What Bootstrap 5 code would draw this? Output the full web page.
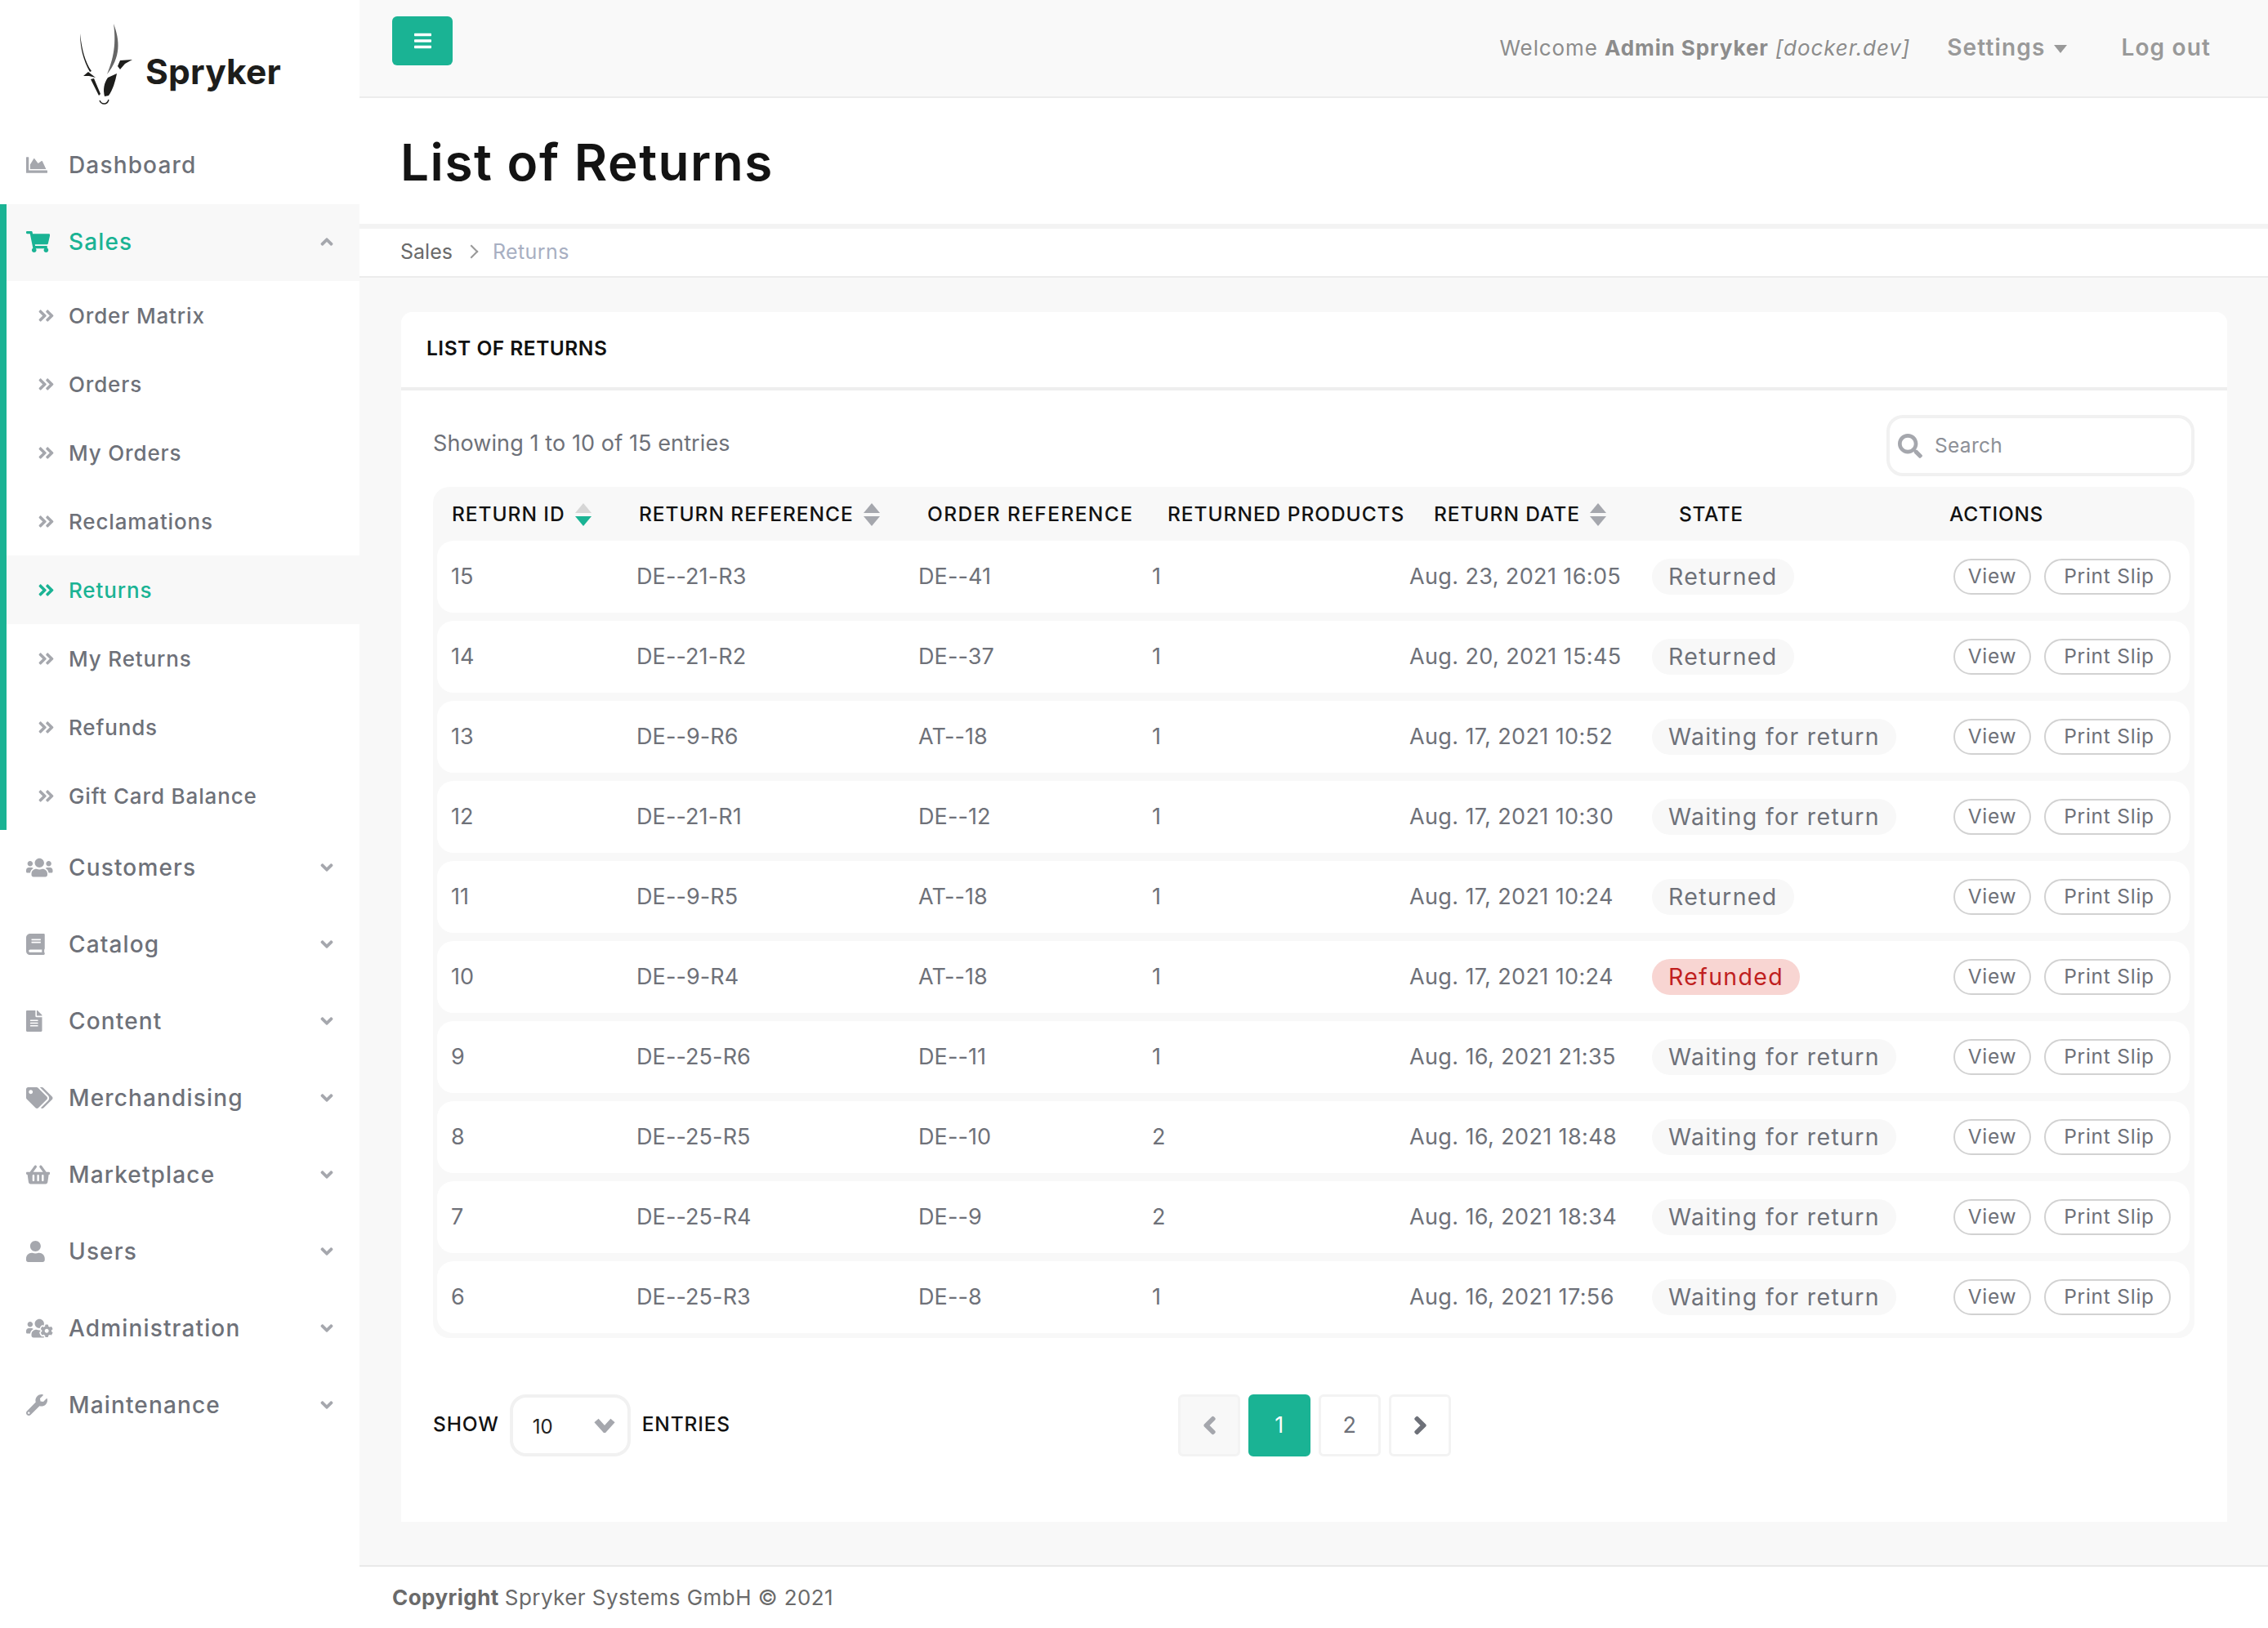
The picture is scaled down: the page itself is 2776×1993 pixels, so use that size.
<!DOCTYPE html>
<html lang="en"><head><meta charset="utf-8"><title>List of Returns</title>
<link href="https://cdn.jsdelivr.net/npm/bootstrap@5.3.0/dist/css/bootstrap.min.css" rel="stylesheet">
<style>
:root{--sg:#1ab394;--tx:#6e7179;--ic:#a5a7ad;--bgs:#f8f8f8}
html,body{height:100%}
body{font-family:Inter,"Noto Sans",sans-serif;background:var(--bgs);color:var(--tx);font-size:27px;letter-spacing:.5px}
.shell{display:flex;min-height:1993px}
.side{width:440px;flex:none;background:#fff}
.brand{height:156px;display:block;position:relative}
.brand svg{display:block}
.brand-word{font-family:Inter,sans-serif;font-weight:700;font-size:42.5px;letter-spacing:.2px;color:#1d1d1b;line-height:1;position:absolute;left:178px;top:67px}
.mlink{display:flex;align-items:center;height:94px;padding:0 32px 2px;color:var(--tx);text-decoration:none;font-size:28px;font-weight:500;letter-spacing:1.15px;line-height:1}
.mlink svg.ico{height:26px;width:auto;fill:var(--ic);flex:none}
.ibox{width:52px;flex:none;display:flex}
.mlink .arw{height:24px;width:16px;fill:var(--ic);margin-left:auto;margin-right:0}
.mopen{border-left:8px solid var(--sg)}
.mopen>.mlink{background:var(--bgs);color:var(--sg);padding-left:24px}
.mopen>.mlink svg.ico{fill:var(--sg)}
.slink{display:flex;align-items:center;height:84px;padding-left:38px;color:var(--tx);text-decoration:none;font-size:26px;font-weight:500;letter-spacing:.85px}
.slink svg{height:23px;width:21px;fill:var(--ic);margin-right:17px;flex:none}
.slink.on{background:var(--bgs);color:var(--sg)}
.slink.on svg{fill:var(--sg)}
.mainc{flex:1;display:flex;flex-direction:column;min-width:0}
.topb{height:120px;border-bottom:2px solid #ececec;padding:20px 70px 0 40px;display:flex;background:#f9f9f9;color:#999}
.burger{width:74px;height:60px;background:var(--sg);border:0;border-radius:6px;display:flex;align-items:center;justify-content:center;padding:0}
.burger svg{width:21px;height:24px;fill:#fff}
.tright{margin-left:auto;display:flex;align-items:center;height:76px;font-size:26px;letter-spacing:.9px;color:#8c8c8c}
.tright b{font-weight:700}
.tlink{font-size:28px;font-weight:600;color:#999;text-decoration:none;letter-spacing:1.15px}
.caretd{display:inline-block;border-top:10px solid #999;border-left:8px solid transparent;border-right:8px solid transparent;margin-left:11px;vertical-align:3px}
.gap-set{margin-left:45px}
.gap-out{margin-left:66px}
.phead{height:160px;background:#fff;display:flex;align-items:center;padding:3px 0 0 50px;border-bottom:6px solid #f3f3f3}
.phead h1{font-size:62px;font-weight:600;color:#131313;margin:0;letter-spacing:1.55px;line-height:1}
.crumbs{height:60px;background:#fff;border-bottom:2px solid #ececec;padding:0 50px;display:flex;align-items:center}
.crumbs .breadcrumb{margin:0;font-size:25px;letter-spacing:0;--bs-breadcrumb-item-padding-x:0}
.crumbs a{color:#6a6a6a;text-decoration:none}
.crumbs .breadcrumb-item.active{color:#a8afc2;letter-spacing:.4px}
.crumbs .breadcrumb-item+.breadcrumb-item::before{content:"";float:none;display:inline-block;width:12px;height:12px;border-top:2px solid #999;border-right:2px solid #999;transform:rotate(45deg);padding:0;margin:0 20px 3px 17px}
.pagew{padding:42px 50px 0 51px;flex:1}
.rcard{background:#fff;border:0;border-radius:14px 14px 0 0;height:1481px;--bs-card-bg:#fff}
.rcard .card-header{height:96px;background:#fff;border:0;border-bottom:4px solid #eee;padding:0 31px 4px;display:flex;align-items:center;font-size:24.5px;font-weight:600;color:#111;letter-spacing:.5px;border-radius:14px 14px 0 0}
.rcard .card-body{padding:30px 40px 80px 39px}
.tools{display:flex;justify-content:space-between;height:75px}
.showing{font-size:27px;margin-top:15px;letter-spacing:.1px}
.srch{width:377px;height:75px;border:4px solid #f1f1f1;border-radius:20px;display:flex;align-items:center;padding-left:10px;background:#fff}
.srch svg{width:30px;height:30px;fill:#a5a7ad;flex:none;margin:0 15px 0 0}
.srch input{border:0;outline:0;background:transparent;font-size:24.5px;color:#777;width:280px;padding:0;letter-spacing:.3px;font-weight:400}
.srch input::placeholder{color:#8d9097;opacity:1}
.twrap{margin-top:13px;background:var(--bgs);border-radius:20px;padding:0 6px 0 5px;height:1042px;overflow:hidden}
.rtable{table-layout:fixed;width:2145px;margin:0;border-collapse:separate;border-spacing:0 10px;--bs-table-bg:transparent;--bs-table-color:var(--tx)}
.rtable th{height:46px;padding:0 0 0 18px;background:transparent;border:0;font-size:24.5px;font-weight:500;color:#121212;white-space:nowrap;vertical-align:middle;letter-spacing:.95px;box-shadow:none}
.rtable th:nth-child(2){padding-left:19px}.rtable th:nth-child(3){padding-left:27px;letter-spacing:1.4px}.rtable th:nth-child(4){padding-left:36px}.rtable th:nth-child(5){padding-left:47px}.rtable th:nth-child(6){padding-left:50px;letter-spacing:.6px}.rtable th:nth-child(7){padding-left:15px;letter-spacing:.7px}
.rtable td{height:88px;padding:1px 0 0 17px;background:#fff;border:0;vertical-align:middle;font-size:27px;white-space:nowrap;letter-spacing:.1px;box-shadow:none}
.rtable td:first-child{border-radius:20px 0 0 20px}
.rtable td:nth-child(2),.rtable td:nth-child(3){padding-left:16px}
.rtable td:nth-child(5){letter-spacing:.38px}
.rtable td:last-child{border-radius:0 20px 20px 0;padding:0 0 0 20px}
.rtable td:nth-child(6){padding-top:0}
.sorti{width:20px;height:28px;vertical-align:-6px;margin-left:12px}
.stpill{display:inline-block;height:44px;line-height:44px;padding:0 20px;border-radius:22px;background:var(--bgs);color:var(--tx);font-size:28.5px;letter-spacing:1.35px}
.stpill.rf{background:#f8d5d2;color:#c01f1f}
.pillbtn{--bs-btn-font-size:24.5px;--bs-btn-color:var(--tx);--bs-btn-border-color:#d2d2d2;--bs-btn-border-width:2px;--bs-btn-padding-x:0;--bs-btn-padding-y:0;--bs-btn-border-radius:22px;--bs-btn-line-height:38px;--bs-btn-bg:#fff;--bs-btn-hover-bg:#fff;--bs-btn-hover-color:var(--tx);letter-spacing:.75px;text-align:center;font-weight:400;padding-bottom:2px}
.pv{width:95px}.pp{width:155px;margin-left:16px;padding-left:4px}
.foot-t{display:flex;margin-top:69px;height:76px}
.lenw{display:flex;align-items:center;width:912px;font-size:24.5px;color:#121212;font-weight:500;letter-spacing:.85px;padding-bottom:3px}
.lensel{width:148px;height:76px;margin:3px 14px 0 13px;border:4px solid #f1f1f1;border-radius:20px;font-size:24px;color:#222;padding:3px 0 0 24px;letter-spacing:0;--bs-form-select-bg-img:none;background-image:none}
.lenbox{position:relative;display:flex}
.lenbox svg{position:absolute;right:33px;top:32px;width:26px;height:18px;fill:none;stroke:#a5a7ad;stroke-width:7;pointer-events:none}
.pgs{margin:0;gap:10px;display:flex;--bs-pagination-border-radius:6px}
.pgs .page-link{width:76px;height:76px;padding:0;display:flex;align-items:center;justify-content:center;border:3px solid #f3f3f3;border-radius:6px!important;color:var(--tx);font-size:27px;background:#fff;margin:0}
.pgs .page-link svg{height:24px;width:15px;fill:var(--tx);stroke:var(--tx);stroke-width:40}
.pgs .pdis{background:var(--bgs)}
.pgs .pdis svg{fill:var(--ic);stroke:var(--ic)}
.pgs .active .page-link{background:var(--sg);border-color:var(--sg);color:#fff}
.pgs .page-item:not(:first-child) .page-link{margin-left:0}
.cfoot{height:77px;background:#fff;border-top:2px solid #e9e9e9;padding:0 40px;display:flex;align-items:center;font-size:26px;color:#6a6a6a;letter-spacing:.45px;margin-top:auto}
.cfoot b{font-weight:700;margin-right:7px}
</style></head>
<body>
<div class="shell">
<aside class="side">
 <a class="brand" href="#">
  <svg width="180" height="156" viewBox="0 0 180 156">
   <path fill="#1d1d1b" d="M98 41C100 60 104 76 112 87L110 88C102 74 98 58 98 41Z"/>
   <path fill="#666" d="M139 29C147 50 148 70 131 91C137 76 143 58 139 29Z"/>
   <path fill="#1d1d1b" d="M147 74L162 73L153 78L147 85L144 81Z"/>
   <path fill="#1d1d1b" d="M102 93L108 88L117 95L109 93Z"/>
   <path fill="#1d1d1b" d="M111 97L115 96L123 115L121 117Z"/>
   <path fill="#1d1d1b" d="M143 90L132 95C127 102 126 110 128 118L133 117C138 110 141 100 143 90Z"/>
   <path fill="none" stroke="#1d1d1b" stroke-width="1.4" d="M122 123C124 128 131 129 133 122"/>
  </svg>
  <span class="brand-word">Spryker</span>
 </a>
 <nav>
  <a class="mlink" href="#"><span class="ibox"><svg class="ico" viewBox="0 0 512 512"><path d="M500 384c6.6 0 12 5.4 12 12v40c0 6.6-5.4 12-12 12H12c-6.6 0-12-5.4-12-12V76c0-6.6 5.4-12 12-12h40c6.6 0 12 5.4 12 12v308h436zM372.700 159.500L288 216l-85.300-113.700c-5.100-6.800-15.500-6.300-19.900 1L96 248v104h384l-89.900-187.800c-3.200-6.500-11.400-8.700-17.400-4.700z"/></svg></span>Dashboard</a>
  <div class="mopen">
   <a class="mlink" href="#"><span class="ibox"><svg class="ico" viewBox="0 0 576 512"><path d="M528.120 301.319l47.273-208C578.806 78.301 567.391 64 551.990 64H159.208l-9.166-44.810C147.758 8.021 137.930 0 126.529 0H24C10.745 0 0 10.745 0 24v16c0 13.255 10.745 24 24 24h69.883l70.248 343.435C147.325 417.100 136 435.222 136 456c0 30.928 25.072 56 56 56s56-25.072 56-56c0-15.674-6.447-29.835-16.824-40h209.647C430.447 426.165 424 440.326 424 456c0 30.928 25.072 56 56 56s56-25.072 56-56c0-22.172-12.888-41.332-31.579-50.405l5.517-24.276c3.413-15.018-8.002-29.319-23.403-29.319H218.117l-6.545-32h293.145c11.206 0 20.920-7.754 23.403-18.681z"/></svg></span>Sales<svg class="arw" viewBox="0 0 320 512"><path d="M177 159.700l136 136c9.400 9.400 9.400 24.600 0 33.900l-22.600 22.600c-9.400 9.400-24.600 9.400-33.900 0L160 255.900l-96.400 96.400c-9.400 9.400-24.600 9.400-33.900 0L7 329.700c-9.400-9.400-9.400-24.600 0-33.900l136-136c9.400-9.500 24.600-9.500 34-.100z"/></svg></a>
   <a class="slink" href="#"><svg viewBox="0 0 448 512"><use href="#dbl"/></svg>Order Matrix</a>
   <a class="slink" href="#"><svg viewBox="0 0 448 512"><use href="#dbl"/></svg>Orders</a>
   <a class="slink" href="#"><svg viewBox="0 0 448 512"><use href="#dbl"/></svg>My Orders</a>
   <a class="slink" href="#"><svg viewBox="0 0 448 512"><use href="#dbl"/></svg>Reclamations</a>
   <a class="slink on" href="#"><svg viewBox="0 0 448 512"><use href="#dbl"/></svg>Returns</a>
   <a class="slink" href="#"><svg viewBox="0 0 448 512"><use href="#dbl"/></svg>My Returns</a>
   <a class="slink" href="#"><svg viewBox="0 0 448 512"><use href="#dbl"/></svg>Refunds</a>
   <a class="slink" href="#"><svg viewBox="0 0 448 512"><use href="#dbl"/></svg>Gift Card Balance</a>
  </div>
  <a class="mlink" href="#"><span class="ibox"><svg class="ico" viewBox="0 0 640 512"><path d="M96 224c35.300 0 64-28.700 64-64s-28.700-64-64-64-64 28.700-64 64 28.700 64 64 64zm448 0c35.300 0 64-28.700 64-64s-28.700-64-64-64-64 28.700-64 64 28.700 64 64 64zm32 32h-64c-17.600 0-33.500 7.100-45.100 18.600 40.300 22.100 68.900 62 75.100 109.400h66c17.700 0 32-14.300 32-32v-32c0-35.300-28.700-64-64-64zm-256 0c61.900 0 112-50.100 112-112S381.900 32 320 32 208 82.100 208 144s50.100 112 112 112zm76.800 32h-8.300c-20.800 10-43.900 16-68.500 16s-47.600-6-68.500-16h-8.300C179.600 288 128 339.600 128 403.200V432c0 26.500 21.500 48 48 48h288c26.500 0 48-21.500 48-48v-28.800c0-63.600-51.600-115.200-115.200-115.200zm-223.700-13.400C161.500 263.100 145.600 256 128 256H64c-35.300 0-64 28.700-64 64v32c0 17.700 14.300 32 32 32h65.900c6.300-47.400 34.900-87.300 75.200-109.400z"/></svg></span>Customers<svg class="arw" viewBox="0 0 320 512"><use href="#adn"/></svg></a>
  <a class="mlink" href="#"><span class="ibox"><svg class="ico" viewBox="0 0 448 512"><path d="M448 360V24c0-13.300-10.700-24-24-24H96C43 0 0 43 0 96v320c0 53 43 96 96 96h328c13.300 0 24-10.700 24-24v-16c0-7.500-3.500-14.300-8.900-18.700-4.200-15.400-4.200-59.300 0-74.700 5.400-4.300 8.900-11.100 8.900-18.600zM128 134c0-3.300 2.700-6 6-6h212c3.300 0 6 2.700 6 6v20c0 3.300-2.700 6-6 6H134c-3.300 0-6-2.700-6-6v-20zm0 64c0-3.300 2.700-6 6-6h212c3.300 0 6 2.700 6 6v20c0 3.300-2.700 6-6 6H134c-3.300 0-6-2.700-6-6v-20zm253.400 250H96c-17.700 0-32-14.300-32-32 0-17.600 14.400-32 32-32h285.400c-1.900 17.100-1.900 46.900 0 64z"/></svg></span>Catalog<svg class="arw" viewBox="0 0 320 512"><use href="#adn"/></svg></a>
  <a class="mlink" href="#"><span class="ibox"><svg class="ico" viewBox="0 0 384 512"><path d="M224 136V0H24C10.700 0 0 10.700 0 24v464c0 13.300 10.700 24 24 24h336c13.300 0 24-10.700 24-24V160H248c-13.200 0-24-10.800-24-24zm64 236c0 6.600-5.400 12-12 12H108c-6.600 0-12-5.400-12-12v-8c0-6.600 5.400-12 12-12h168c6.600 0 12 5.400 12 12v8zm0-64c0 6.600-5.400 12-12 12H108c-6.600 0-12-5.400-12-12v-8c0-6.600 5.400-12 12-12h168c6.600 0 12 5.400 12 12v8zm0-72v8c0 6.600-5.400 12-12 12H108c-6.600 0-12-5.400-12-12v-8c0-6.600 5.400-12 12-12h168c6.600 0 12 5.400 12 12zm96-114.100v6.100H256V0h6.100c6.400 0 12.500 2.500 17 7l97.900 98c4.500 4.500 7 10.600 7 16.900z"/></svg></span>Content<svg class="arw" viewBox="0 0 320 512"><use href="#adn"/></svg></a>
  <a class="mlink" href="#"><span class="ibox"><svg class="ico" viewBox="0 0 640 512"><path d="M497.941 225.941L286.059 14.059A48 48 0 0 0 252.118 0H48C21.490 0 0 21.490 0 48v204.118a48 48 0 0 0 14.059 33.941l211.882 211.882c18.744 18.745 49.136 18.746 67.882 0l204.118-204.118c18.745-18.745 18.745-49.137 0-67.882zM112 160c-26.510 0-48-21.490-48-48s21.490-48 48-48 48 21.490 48 48-21.490 48-48 48zm513.941 133.823L421.823 497.941c-18.745 18.745-49.137 18.745-67.882 0l-.360-.360L527.640 323.522c16.999-16.999 26.360-39.600 26.360-63.640s-9.362-46.641-26.360-63.640L331.397 0h48.721a48 48 0 0 1 33.941 14.059l211.882 211.882c18.745 18.745 18.745 49.137 0 67.882z"/></svg></span>Merchandising<svg class="arw" viewBox="0 0 320 512"><use href="#adn"/></svg></a>
  <a class="mlink" href="#"><span class="ibox"><svg class="ico" viewBox="0 0 576 512"><path d="M576 216v16c0 13.255-10.745 24-24 24h-8l-26.113 182.788C514.509 462.435 494.257 480 470.370 480H105.630c-23.887 0-44.139-17.565-47.518-41.212L32 256h-8c-13.255 0-24-10.745-24-24v-16c0-13.255 10.745-24 24-24h67.341l106.780-146.821c10.395-14.292 30.407-17.453 44.701-7.058 14.293 10.395 17.453 30.408 7.058 44.701L170.477 192h235.046L326.120 82.821c-10.395-14.292-7.234-34.306 7.059-44.701 14.291-10.395 34.306-7.235 44.701 7.058L484.659 192H552c13.255 0 24 10.745 24 24zM312 392V280c0-13.255-10.745-24-24-24s-24 10.745-24 24v112c0 13.255 10.745 24 24 24s24-10.745 24-24zm112 0V280c0-13.255-10.745-24-24-24s-24 10.745-24 24v112c0 13.255 10.745 24 24 24s24-10.745 24-24zm-224 0V280c0-13.255-10.745-24-24-24s-24 10.745-24 24v112c0 13.255 10.745 24 24 24s24-10.745 24-24z"/></svg></span>Marketplace<svg class="arw" viewBox="0 0 320 512"><use href="#adn"/></svg></a>
  <a class="mlink" href="#"><span class="ibox"><svg class="ico" viewBox="0 0 448 512"><path d="M224 256c70.700 0 128-57.300 128-128S294.700 0 224 0 96 57.300 96 128s57.300 128 128 128zm89.600 32h-16.700c-22.200 10.200-46.900 16-72.900 16s-50.600-5.800-72.900-16h-16.700C60.200 288 0 348.200 0 422.400V464c0 26.500 21.500 48 48 48h352c26.500 0 48-21.500 48-48v-41.600c0-74.200-60.200-134.400-134.400-134.400z"/></svg></span>Users<svg class="arw" viewBox="0 0 320 512"><use href="#adn"/></svg></a>
  <a class="mlink" href="#"><span class="ibox"><svg class="ico" viewBox="0 0 640 512"><path d="M610.500 341.300c2.600-14.100 2.600-28.500 0-42.600l25.800-14.900c3-1.700 4.300-5.200 3.300-8.500-6.700-21.600-18.200-41.200-33.200-57.400-2.300-2.500-6-3.100-9-1.400l-25.800 14.900c-10.900-9.300-23.400-16.500-36.900-21.300v-29.800c0-3.400-2.400-6.400-5.700-7.100-22.300-5-45-4.800-66.200 0-3.300.7-5.700 3.700-5.700 7.100v29.800c-13.500 4.800-26 12-36.900 21.300l-25.800-14.900c-2.900-1.700-6.700-1.100-9 1.400-15 16.200-26.500 35.800-33.200 57.400-1 3.300.4 6.800 3.300 8.500l25.800 14.900c-2.600 14.100-2.600 28.500 0 42.600l-25.800 14.900c-3 1.700-4.300 5.200-3.300 8.500 6.700 21.600 18.200 41.100 33.200 57.400 2.300 2.500 6 3.100 9 1.400l25.800-14.900c10.900 9.300 23.400 16.500 36.900 21.300v29.800c0 3.400 2.400 6.400 5.700 7.100 22.300 5 45 4.800 66.200 0 3.300-.7 5.700-3.700 5.700-7.100v-29.800c13.500-4.800 26-12 36.900-21.300l25.800 14.900c2.900 1.700 6.700 1.100 9-1.400 15-16.200 26.500-35.800 33.200-57.400 1-3.300-.4-6.800-3.300-8.500l-25.800-14.900zM496 368.500c-26.800 0-48.500-21.800-48.500-48.500s21.800-48.500 48.500-48.500 48.500 21.800 48.500 48.500-21.700 48.500-48.500 48.500zM96 224c35.300 0 64-28.700 64-64s-28.700-64-64-64-64 28.700-64 64 28.700 64 64 64zm224 32c1.900 0 3.700-.5 5.600-.6 8.300-21.700 20.500-42.100 36.300-59.200 7.400-8 17.900-12.600 28.900-12.600 6.900 0 13.700 1.800 19.600 5.300l7.900 4.600c.8-.5 1.600-.9 2.400-1.400 7-14.600 11.200-30.800 11.200-48 0-61.900-50.100-112-112-112S208 82.100 208 144c0 61.900 50.100 112 112 112zm105.200 194.500c-2.300-1.200-4.600-2.600-6.800-3.900-8.200 4.800-15.300 9.800-27.500 9.800-10.900 0-21.400-4.600-28.900-12.600-18.300-19.800-32.300-43.900-40.200-69.600-10.700-34.500 24.900-49.700 25.800-50.300-.1-2.600-.1-5.200 0-7.800l-7.900-4.600c-3.800-2.200-7-5-9.800-8.100-3.300.2-6.500.6-9.800.6-24.600 0-47.600-6-68.500-16h-8.300C179.600 288 128 339.600 128 403.200V432c0 26.500 21.500 48 48 48h255.400c-3.700-6-6.200-12.800-6.200-20.300v-9.200zM173.100 274.600C161.500 263.100 145.600 256 128 256H64c-35.300 0-64 28.700-64 64v32c0 17.700 14.300 32 32 32h65.900c6.300-47.400 34.900-87.300 75.200-109.400z"/></svg></span>Administration<svg class="arw" viewBox="0 0 320 512"><use href="#adn"/></svg></a>
  <a class="mlink" href="#"><span class="ibox"><svg class="ico" viewBox="0 0 512 512"><path d="M507.730 109.100c-2.240-9.030-13.540-12.090-20.120-5.510l-74.360 74.360-67.880-11.310-11.310-67.880 74.360-74.360c6.620-6.620 3.430-17.900-5.660-20.160-47.380-11.740-99.550.91-136.580 37.930-39.640 39.640-50.550 97.100-34.050 147.200L18.740 402.760c-24.990 24.990-24.990 65.510 0 90.500 24.990 24.990 65.510 24.990 90.500 0l213.210-213.210c50.120 16.710 107.470 5.680 147.370-34.220 37.070-37.070 49.700-89.320 37.910-136.730zM64 472c-13.250 0-24-10.750-24-24 0-13.260 10.750-24 24-24s24 10.740 24 24c0 13.250-10.750 24-24 24z"/></svg></span>Maintenance<svg class="arw" viewBox="0 0 320 512"><use href="#adn"/></svg></a>
 </nav>
 <svg width="0" height="0" class="d-block"><defs>
  <path id="dbl" d="M224.300 273l-136 136c-9.400 9.400-24.600 9.400-33.900 0l-22.600-22.600c-9.400-9.400-9.400-24.600 0-33.900l96.400-96.400-96.400-96.400c-9.400-9.400-9.400-24.600 0-33.900L54.300 103c9.400-9.400 24.600-9.400 33.900 0l136 136c9.500 9.400 9.500 24.600.1 34zm192-34l-136-136c-9.400-9.400-24.600-9.400-33.900 0l-22.600 22.600c-9.400 9.400-9.400 24.600 0 33.900l96.400 96.400-96.400 96.400c-9.400 9.400-9.400 24.600 0 33.900l22.600 22.600c9.400 9.400 24.600 9.400 33.900 0l136-136c9.400-9.200 9.400-24.400 0-33.800z"/>
  <path id="adn" d="M143 352.300L7 216.300c-9.400-9.400-9.400-24.600 0-33.900l22.600-22.600c9.400-9.400 24.600-9.400 33.900 0l96.400 96.400 96.400-96.400c9.400-9.400 24.600-9.400 33.900 0l22.600 22.600c9.400 9.400 9.400 24.600 0 33.900l-136 136c-9.200 9.400-24.400 9.400-33.800 0z"/>
 </defs></svg>
</aside>
<div class="mainc">
 <header class="topb">
  <button class="burger" type="button" aria-label="Menu"><svg viewBox="0 0 448 512"><path d="M16 132h416c8.837 0 16-7.163 16-16V76c0-8.837-7.163-16-16-16H16C7.163 60 0 67.163 0 76v40c0 8.837 7.163 16 16 16zm0 160h416c8.837 0 16-7.163 16-16v-40c0-8.837-7.163-16-16-16H16c-8.837 0-16 7.163-16 16v40c0 8.837 7.163 16 16 16zm0 160h416c8.837 0 16-7.163 16-16v-40c0-8.837-7.163-16-16-16H16c-8.837 0-16 7.163-16 16v40c0 8.837 7.163 16 16 16z"/></svg></button>
  <div class="tright">
   <span>Welcome <b>Admin Spryker</b> <i>[docker.dev]</i></span>
   <a class="tlink gap-set" href="#">Settings<span class="caretd"></span></a>
   <a class="tlink gap-out" href="#">Log out</a>
  </div>
 </header>
 <div class="phead"><h1>List of Returns</h1></div>
 <div class="crumbs"><ol class="breadcrumb"><li class="breadcrumb-item"><a href="#">Sales</a></li><li class="breadcrumb-item active">Returns</li></ol></div>
 <main class="pagew">
  <section class="card rcard">
   <div class="card-header">LIST OF RETURNS</div>
   <div class="card-body">
    <div class="tools">
     <div class="showing">Showing 1 to 10 of 15 entries</div>
     <label class="srch"><svg viewBox="0 0 512 512"><path d="M505 442.700L405.300 343c-4.500-4.500-10.600-7-17-7H372c27.600-35.300 44-79.700 44-128C416 93.100 322.900 0 208 0S0 93.100 0 208s93.100 208 208 208c48.300 0 92.700-16.400 128-44v16.300c0 6.400 2.500 12.500 7 17l99.700 99.700c9.400 9.400 24.600 9.400 33.900 0l28.300-28.300c9.400-9.400 9.400-24.600.1-34zM208 336c-70.700 0-128-57.200-128-128 0-70.700 57.200-128 128-128 70.700 0 128 57.200 128 128 0 70.700-57.200 128-128 128z"/></svg><input type="text" placeholder="Search"></label>
    </div>
    <div class="twrap">
     <table class="table rtable">
      <colgroup><col style="width:228px"><col style="width:345px"><col style="width:285px"><col style="width:315px"><col style="width:297px"><col style="width:366px"><col style="width:309px"></colgroup>
      <thead><tr>
       <th>RETURN ID<svg class="sorti" viewBox="0 0 20 28"><path fill="#d6d6d6" d="M10 0L20 12H0Z"/><path fill="#1ab394" d="M0 16H20L10 28Z"/></svg></th>
       <th>RETURN REFERENCE<svg class="sorti" viewBox="0 0 20 28"><path fill="#a5a7ad" d="M10 0L20 12H0Z"/><path fill="#a5a7ad" d="M0 16H20L10 28Z"/></svg></th>
       <th>ORDER REFERENCE</th>
       <th>RETURNED PRODUCTS</th>
       <th>RETURN DATE<svg class="sorti" viewBox="0 0 20 28"><path fill="#a5a7ad" d="M10 0L20 12H0Z"/><path fill="#a5a7ad" d="M0 16H20L10 28Z"/></svg></th>
       <th>STATE</th>
       <th>ACTIONS</th>
      </tr></thead>
      <tbody>
       <tr><td>15</td><td>DE--21-R3</td><td>DE--41</td><td>1</td><td>Aug. 23, 2021 16:05</td><td><span class="stpill">Returned</span></td><td><a class="btn pillbtn pv" href="#">View</a><a class="btn pillbtn pp" href="#">Print Slip</a></td></tr>
       <tr><td>14</td><td>DE--21-R2</td><td>DE--37</td><td>1</td><td>Aug. 20, 2021 15:45</td><td><span class="stpill">Returned</span></td><td><a class="btn pillbtn pv" href="#">View</a><a class="btn pillbtn pp" href="#">Print Slip</a></td></tr>
       <tr><td>13</td><td>DE--9-R6</td><td>AT--18</td><td>1</td><td>Aug. 17, 2021 10:52</td><td><span class="stpill">Waiting for return</span></td><td><a class="btn pillbtn pv" href="#">View</a><a class="btn pillbtn pp" href="#">Print Slip</a></td></tr>
       <tr><td>12</td><td>DE--21-R1</td><td>DE--12</td><td>1</td><td>Aug. 17, 2021 10:30</td><td><span class="stpill">Waiting for return</span></td><td><a class="btn pillbtn pv" href="#">View</a><a class="btn pillbtn pp" href="#">Print Slip</a></td></tr>
       <tr><td>11</td><td>DE--9-R5</td><td>AT--18</td><td>1</td><td>Aug. 17, 2021 10:24</td><td><span class="stpill">Returned</span></td><td><a class="btn pillbtn pv" href="#">View</a><a class="btn pillbtn pp" href="#">Print Slip</a></td></tr>
       <tr><td>10</td><td>DE--9-R4</td><td>AT--18</td><td>1</td><td>Aug. 17, 2021 10:24</td><td><span class="stpill rf">Refunded</span></td><td><a class="btn pillbtn pv" href="#">View</a><a class="btn pillbtn pp" href="#">Print Slip</a></td></tr>
       <tr><td>9</td><td>DE--25-R6</td><td>DE--11</td><td>1</td><td>Aug. 16, 2021 21:35</td><td><span class="stpill">Waiting for return</span></td><td><a class="btn pillbtn pv" href="#">View</a><a class="btn pillbtn pp" href="#">Print Slip</a></td></tr>
       <tr><td>8</td><td>DE--25-R5</td><td>DE--10</td><td>2</td><td>Aug. 16, 2021 18:48</td><td><span class="stpill">Waiting for return</span></td><td><a class="btn pillbtn pv" href="#">View</a><a class="btn pillbtn pp" href="#">Print Slip</a></td></tr>
       <tr><td>7</td><td>DE--25-R4</td><td>DE--9</td><td>2</td><td>Aug. 16, 2021 18:34</td><td><span class="stpill">Waiting for return</span></td><td><a class="btn pillbtn pv" href="#">View</a><a class="btn pillbtn pp" href="#">Print Slip</a></td></tr>
       <tr><td>6</td><td>DE--25-R3</td><td>DE--8</td><td>1</td><td>Aug. 16, 2021 17:56</td><td><span class="stpill">Waiting for return</span></td><td><a class="btn pillbtn pv" href="#">View</a><a class="btn pillbtn pp" href="#">Print Slip</a></td></tr>
      </tbody>
     </table>
    </div>
    <div class="foot-t">
     <div class="lenw"><span>SHOW</span><div class="lenbox"><select class="form-select lensel" aria-label="Entries"><option>10</option><option>25</option></select><svg viewBox="0 0 26 18"><path d="M3 3L13 14L23 3"/></svg></div><span>ENTRIES</span></div>
     <ul class="pagination pgs">
      <li class="page-item"><a class="page-link pdis" href="#" aria-label="Previous"><svg viewBox="0 0 320 512"><path d="M34.520 239.030L228.870 44.690c9.370-9.370 24.570-9.370 33.940 0l22.670 22.670c9.360 9.360 9.370 24.520.04 33.900L131.490 256l154.020 154.750c9.340 9.380 9.320 24.540-.04 33.900l-22.670 22.670c-9.370 9.370-24.570 9.370-33.940 0L34.520 272.970c-9.370-9.370-9.370-24.570 0-33.940z"/></svg></a></li>
      <li class="page-item active"><a class="page-link" href="#">1</a></li>
      <li class="page-item"><a class="page-link" href="#">2</a></li>
      <li class="page-item"><a class="page-link" href="#" aria-label="Next"><svg viewBox="0 0 320 512"><path d="M285.476 272.971L91.132 467.314c-9.373 9.373-24.569 9.373-33.941 0l-22.667-22.667c-9.357-9.357-9.375-24.522-.04-33.901L188.505 256 34.484 101.255c-9.335-9.379-9.317-24.544.04-33.901l22.667-22.667c9.373-9.373 24.569-9.373 33.941 0L285.475 239.030c9.373 9.372 9.373 24.568.001 33.941z"/></svg></a></li>
     </ul>
    </div>
   </div>
  </section>
 </main>
 <footer class="cfoot"><b>Copyright</b> Spryker Systems GmbH © 2021</footer>
</div>
</div>
<script src="https://cdn.jsdelivr.net/npm/bootstrap@5.3.0/dist/js/bootstrap.bundle.min.js"></script>
</body></html>
